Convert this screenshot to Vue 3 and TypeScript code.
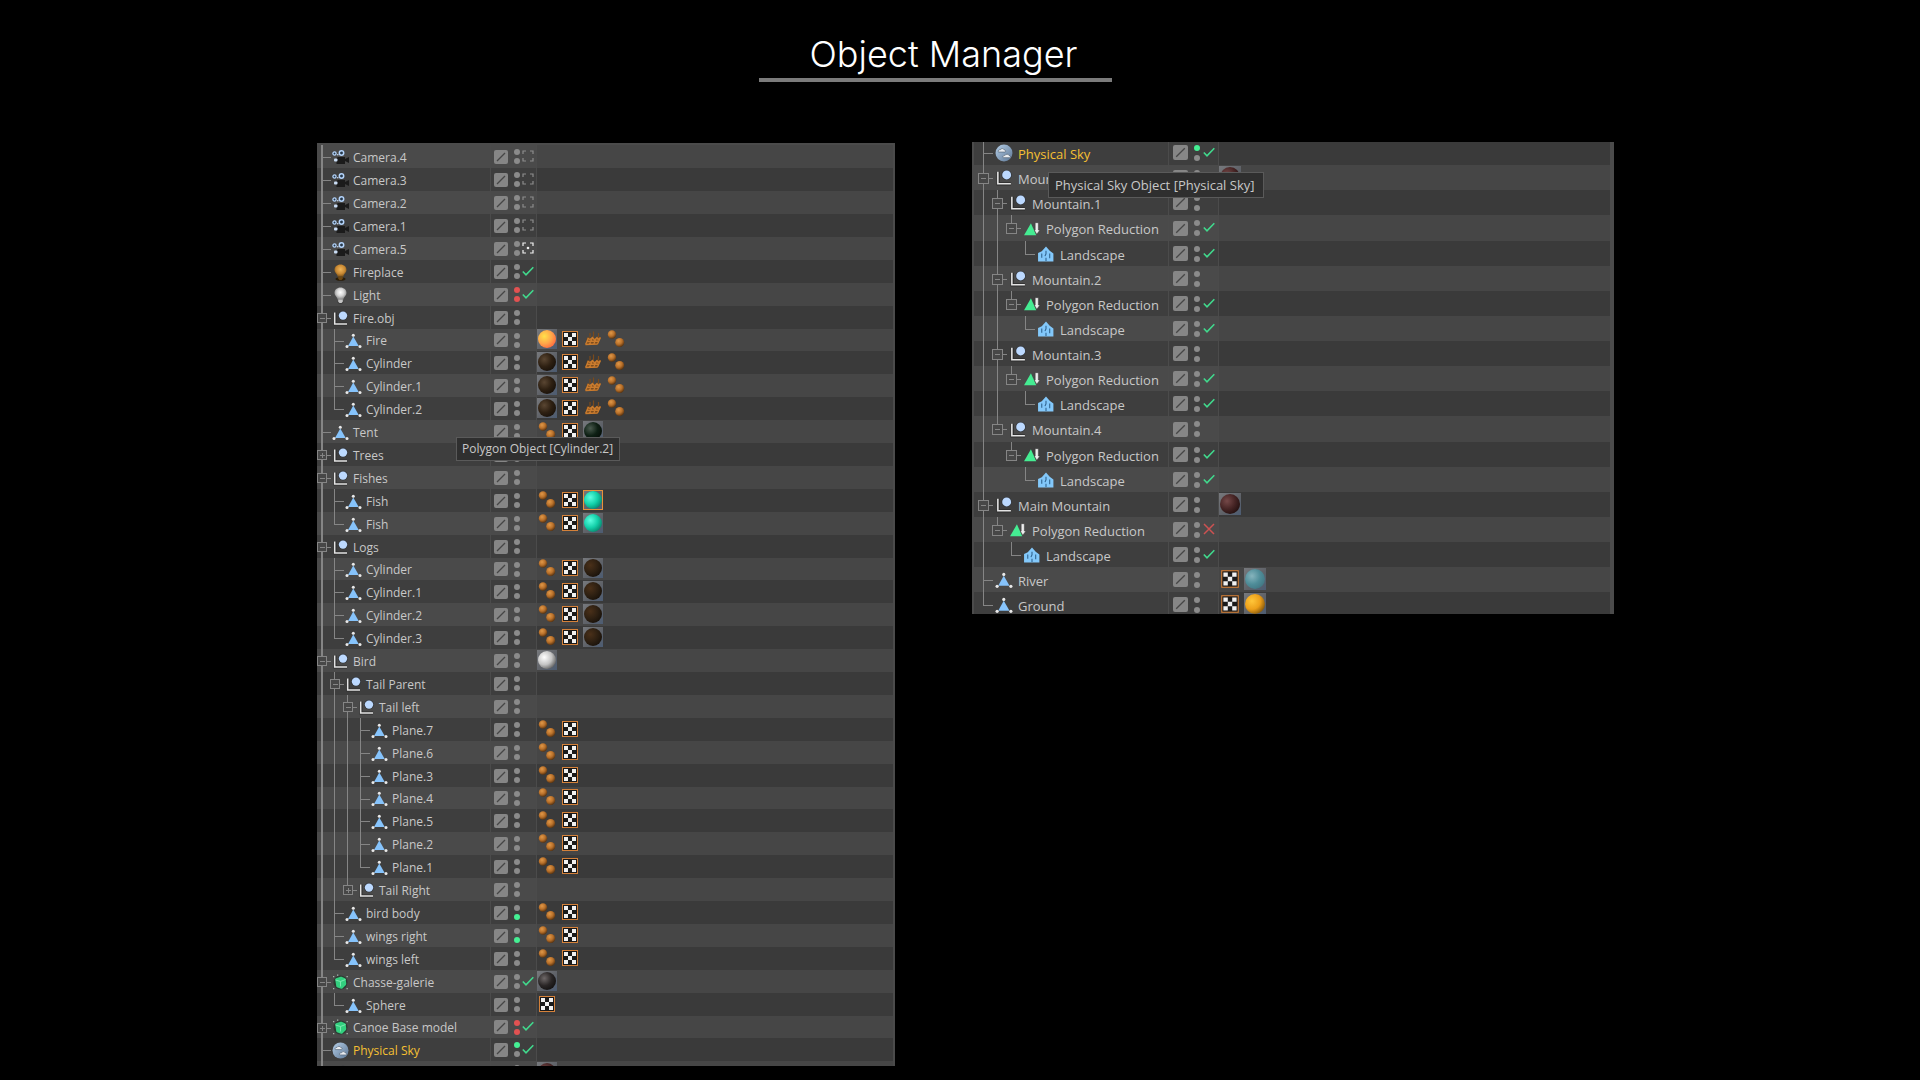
<script setup lang="ts">
type Guide = 'none' | 'line' | 'tee' | 'corner'
type Kind = 'camera' | 'bulb' | 'light' | 'null' | 'polygon' | 'volume' | 'sky' | 'reduction' | 'landscape'
type Dot = 'off' | 'on' | 'red'
type Mark = '' | 'check' | 'cross' | 'frame' | 'target'

interface Row {
  guides: Guide[]
  kind: Kind
  name: string
  box: '' | 'plus' | 'minus'
  dots: [Dot, Dot]
  mark: Mark
  tags: string[]
}

interface Panel {
  id: string
  label: string
  tip: string
  rows: Row[]
}

const codes: Record<string, Guide> = { ' ': 'none', '|': 'line', t: 'tee', c: 'corner' }

function row(guides: string, kind: Kind, name: string, options: Partial<Row> = {}): Row {
  return {
    guides: guides.split('').map((code) => codes[code]),
    kind,
    name,
    box: '',
    dots: ['off', 'off'],
    mark: '',
    tags: [],
    ...options,
  }
}

const surface = ['points', 'uv']

const scene: Row[] = [
  row('t', 'camera', 'Camera.4', { mark: 'frame' }),
  row('t', 'camera', 'Camera.3', { mark: 'frame' }),
  row('t', 'camera', 'Camera.2', { mark: 'frame' }),
  row('t', 'camera', 'Camera.1', { mark: 'frame' }),
  row('t', 'camera', 'Camera.5', { mark: 'target' }),
  row('t', 'bulb', 'Fireplace', { mark: 'check' }),
  row('t', 'light', 'Light', { mark: 'check', dots: ['red', 'red'] }),
  row('t', 'null', 'Fire.obj', { box: 'minus' }),
  row('|t', 'polygon', 'Fire', { tags: ['fire', 'uv', 'mesh', 'points'] }),
  row('|t', 'polygon', 'Cylinder', { tags: ['bark', 'uv', 'mesh', 'points'] }),
  row('|t', 'polygon', 'Cylinder.1', { tags: ['bark', 'uv', 'mesh', 'points'] }),
  row('|c', 'polygon', 'Cylinder.2', { tags: ['bark', 'uv', 'mesh', 'points'] }),
  row('t', 'polygon', 'Tent', { tags: [...surface, 'forest'] }),
  row('t', 'null', 'Trees', { box: 'plus' }),
  row('t', 'null', 'Fishes', { box: 'minus' }),
  row('|t', 'polygon', 'Fish', { tags: [...surface, 'teal picked'] }),
  row('|c', 'polygon', 'Fish', { tags: [...surface, 'teal'] }),
  row('t', 'null', 'Logs', { box: 'minus' }),
  row('|t', 'polygon', 'Cylinder', { tags: [...surface, 'wood'] }),
  row('|t', 'polygon', 'Cylinder.1', { tags: [...surface, 'wood'] }),
  row('|t', 'polygon', 'Cylinder.2', { tags: [...surface, 'wood'] }),
  row('|c', 'polygon', 'Cylinder.3', { tags: [...surface, 'wood'] }),
  row('t', 'null', 'Bird', { box: 'minus', tags: ['white'] }),
  row('|t', 'null', 'Tail Parent', { box: 'minus' }),
  row('||t', 'null', 'Tail left', { box: 'minus' }),
  ...[7, 6, 3, 4, 5, 2].map((n) => row('|||t', 'polygon', `Plane.${n}`, { tags: surface })),
  row('|||c', 'polygon', 'Plane.1', { tags: surface }),
  row('||c', 'null', 'Tail Right', { box: 'plus' }),
  row('|t', 'polygon', 'bird body', { tags: surface, dots: ['off', 'on'] }),
  row('|t', 'polygon', 'wings right', { tags: surface, dots: ['off', 'on'] }),
  row('|c', 'polygon', 'wings left', { tags: surface }),
  row('t', 'volume', 'Chasse-galerie', { box: 'minus', mark: 'check', tags: ['black'] }),
  row('|c', 'polygon', 'Sphere', { tags: ['uv'] }),
  row('t', 'volume', 'Canoe Base model', { box: 'plus', mark: 'check', dots: ['red', 'red'] }),
  row('t', 'sky', 'Physical Sky', { mark: 'check', dots: ['on', 'off'] }),
  row('t', 'null', 'Mountains', { box: 'minus', tags: ['rock'] }),
]

const mountains: Row[] = [1, 2, 3, 4].flatMap((n) => {
  const stem = n < 4 ? '||' : '| '
  return [
    row(n < 4 ? '|t' : '|c', 'null', `Mountain.${n}`, { box: 'minus' }),
    row(`${stem}c`, 'reduction', 'Polygon Reduction', { box: 'minus', mark: 'check' }),
    row(`${stem} c`, 'landscape', 'Landscape', { mark: 'check' }),
  ]
})

const terrain: Row[] = [
  row('t', 'sky', 'Physical Sky', { mark: 'check', dots: ['on', 'off'] }),
  row('t', 'null', 'Mountains', { box: 'minus', tags: ['rock'] }),
  ...mountains,
  row('t', 'null', 'Main Mountain', { box: 'minus', tags: ['rock'] }),
  row('|c', 'reduction', 'Polygon Reduction', { box: 'minus', mark: 'cross' }),
  row('| c', 'landscape', 'Landscape', { mark: 'check' }),
  row('t', 'polygon', 'River', { tags: ['uv', 'water'] }),
  row('c', 'polygon', 'Ground', { tags: ['uv', 'amber'] }),
]

const panels: Panel[] = [
  { id: 'scene', label: 'Scene objects', tip: 'Polygon Object [Cylinder.2]', rows: scene },
  { id: 'terrain', label: 'Terrain objects', tip: 'Physical Sky Object [Physical Sky]', rows: terrain },
]
</script>

<template>
  <main class="page">
    <svg class="defs" aria-hidden="true">
      <defs>
        <radialGradient id="copper" cx="38%" cy="32%" r="70%">
          <stop offset="0" stop-color="#e09848" />
          <stop offset="0.55" stop-color="#b8702a" />
          <stop offset="1" stop-color="#5a3410" />
        </radialGradient>
        <radialGradient id="glow-warm" cx="50%" cy="40%" r="60%">
          <stop offset="0" stop-color="#f0b558" />
          <stop offset="0.6" stop-color="#c98a35" />
          <stop offset="1" stop-color="#7c5218" />
        </radialGradient>
        <radialGradient id="glow-cold" cx="50%" cy="40%" r="60%">
          <stop offset="0" stop-color="#ffffff" />
          <stop offset="0.5" stop-color="#d4d4d4" />
          <stop offset="1" stop-color="#7d7d7d" />
        </radialGradient>
        <linearGradient id="air" x1="0" y1="0" x2="1" y2="1">
          <stop offset="0" stop-color="#b4cde6" />
          <stop offset="1" stop-color="#5d7896" />
        </linearGradient>
      </defs>
    </svg>

    <header class="heading">
      <h1>Object Manager</h1>
    </header>

    <div class="panels">
      <section v-for="panel in panels" :key="panel.id" class="panel" :class="panel.id" :aria-label="panel.label">
        <ul class="rows">
          <li v-for="(item, index) in panel.rows" :key="index" class="row">
            <div class="tree">
              <span v-for="(guide, depth) in item.guides" :key="depth" class="guide" :class="guide">
                <button
                  v-if="item.box && depth === item.guides.length - 1"
                  type="button"
                  class="expander"
                  :class="item.box"
                  :aria-label="`Toggle ${item.name}`"
                ></button>
              </span>
              <svg class="icon" viewBox="0 0 17 17" aria-hidden="true">
                <template v-if="item.kind === 'camera'">
                  <path d="M6 8h7v2l4-2v6l-4-2v3H4.500V9z" fill="#1b1b1b" />
                  <circle cx="2.500" cy="4.500" r="1.600" fill="#26384a" stroke="#b4d4fb" stroke-width="1.300" />
                  <circle cx="9.500" cy="4" r="2.200" fill="#26384a" stroke="#b4d4fb" stroke-width="1.500" />
                  <circle cx="5.800" cy="5.800" r="0.800" fill="#cfe2fa" />
                  <rect x="2" y="9.500" width="3.500" height="3" rx="1" fill="#c9dcf4" />
                </template>
                <template v-else-if="item.kind === 'bulb' || item.kind === 'light'">
                  <ellipse
                    cx="8.500"
                    cy="15"
                    :rx="item.kind === 'bulb' ? 5 : 3"
                    ry="1.800"
                    :fill="item.kind === 'bulb' ? '#2b1d08' : '#3a3a3a'"
                  />
                  <path
                    d="M8.500 0.500c3.600 0 6 2.300 6 5.200 0 3-2.800 4-3.200 7H5.700c-.4-3-3.200-4-3.200-7 0-2.900 2.400-5.200 6-5.200z"
                    :fill="item.kind === 'bulb' ? 'url(#glow-warm)' : 'url(#glow-cold)'"
                  />
                  <path
                    d="M6.200 12.500h4.600v2.200l-1.300 1.300h-2l-1.300-1.300z"
                    :fill="item.kind === 'bulb' ? '#6b4714' : '#c4c4c4'"
                  />
                </template>
                <template v-else-if="item.kind === 'null'">
                  <path d="M3 2.500V14H15" fill="none" stroke="#2c2c2c" stroke-width="3" />
                  <path d="M2.700 2.500V14H15" fill="none" stroke="#e4e4e4" stroke-width="1.500" />
                  <circle cx="11" cy="5.600" r="4.900" fill="#34373c" />
                  <circle cx="11" cy="5.600" r="4.200" fill="#bcd9ff" />
                </template>
                <template v-else-if="item.kind === 'polygon'">
                  <path d="M8.300 4.500L13.700 14H3z" fill="#86c3fb" />
                  <circle cx="8.300" cy="3.200" r="1.500" fill="#e9e9e9" />
                  <circle cx="2" cy="14.500" r="1.500" fill="#e9e9e9" />
                  <circle cx="15" cy="14.500" r="1.500" fill="#e9e9e9" />
                </template>
                <template v-else-if="item.kind === 'volume'">
                  <circle cx="8.500" cy="8.500" r="7" fill="#2c3a32" />
                  <path
                    d="M4.500 5.500l4.500-1.500 3.500 1.500.5 4.500-3.500 3.500-4-1.500z"
                    fill="#33d07f"
                    stroke="#33d07f"
                    stroke-width="2.500"
                    stroke-linejoin="round"
                  />
                  <path d="M3.500 6l5 1.500 5-2M8.500 7.500v5" fill="none" stroke="#8af0bb" stroke-width="0.800" />
                  <path
                    d="M1 2h1.300v1.300H1zM14.500 2h1.300v1.300h-1.300zM1 14h1.300v1.300H1zM14.500 14h1.300v1.300h-1.300zM5 0.500h1.300v1.300H5z"
                    fill="#a9b4ad"
                  />
                </template>
                <template v-else-if="item.kind === 'sky'">
                  <circle cx="8.500" cy="8.500" r="8" fill="url(#air)" />
                  <path
                    d="M3 7.200c0-1.500 1.300-2 2-1.700.5-1.600 3.400-1.600 3.900.2 1.300-.1 1.700 1.500.6 1.900H3.500z"
                    fill="#e9edf1"
                    stroke="#4b5a6b"
                    stroke-width="0.600"
                  />
                  <path
                    d="M7.500 12.500c0-1.500 1.300-2 2-1.700.5-1.600 3.400-1.600 3.900.2 1.300-.1 1.700 1.500.6 1.900H8z"
                    fill="#e9edf1"
                    stroke="#4b5a6b"
                    stroke-width="0.600"
                  />
                </template>
                <template v-else-if="item.kind === 'reduction'">
                  <path d="M7.500 3L12.500 14.500H1z" fill="#45ec92" />
                  <path d="M11.500 2.500h3v7h1.500l-3 4-2.300-4h.8z" fill="#eeeeee" stroke="#3b3b3b" stroke-width="0.500" />
                </template>
                <template v-else>
                  <path d="M1 15.500V7.500l3.500-1.500 4-4.500 3.500 4 3.500 2.500v7.500z" fill="#83c8fa" />
                  <path d="M4.500 8v4M8.500 5.500v3l-1 2M12 8v4.500M8.500 12v3" fill="none" stroke="#2d618c" stroke-width="1" />
                </template>
              </svg>
              <span class="name" :class="{ selected: item.kind === 'sky' }">{{ item.name }}</span>
            </div>

            <div class="flags">
              <button type="button" class="layer" :aria-label="`Layer of ${item.name}`">
                <svg viewBox="0 0 14 14" aria-hidden="true">
                  <path d="M3 11L11 3" stroke="#464646" stroke-width="1.200" />
                </svg>
              </button>
              <span class="dots">
                <i v-for="(dot, n) in item.dots" :key="n" class="dot" :class="dot"></i>
              </span>
              <svg v-if="item.mark" class="mark" viewBox="0 0 12 12" fill="none" aria-hidden="true">
                <path v-if="item.mark === 'check'" d="M0.800 6.500L4 9.800 11.300 2.300" stroke="#41d98d" stroke-width="1.600" />
                <path
                  v-else-if="item.mark === 'cross'"
                  d="M1 1l10 10M11 1L1 11"
                  stroke="#cc5252"
                  stroke-width="1.500"
                />
                <template v-else>
                  <path
                    d="M1 4V1h3M8 1h3v3M11 8v3H8M4 11H1V8"
                    :stroke="item.mark === 'target' ? '#f0f0f0' : '#8c8c8c'"
                    stroke-width="1.200"
                  />
                  <circle v-if="item.mark === 'target'" cx="6" cy="6" r="1.300" fill="#f0f0f0" />
                </template>
              </svg>
            </div>

            <div class="tags">
              <template v-for="(tag, n) in item.tags" :key="n">
                <svg v-if="tag === 'uv'" class="tag" viewBox="0 0 20 20" aria-hidden="true">
                  <rect x="2.500" y="2.500" width="15" height="15" fill="#1a1a1a" stroke="#d4813a" />
                  <path d="M4 4h4v4H4zM12 4h4v4h-4zM8 8h4v4H8zM4 12h4v4H4zM12 12h4v4h-4z" fill="#f1f1f1" />
                </svg>
                <svg v-else-if="tag === 'points'" class="tag" viewBox="0 0 20 20" aria-hidden="true">
                  <circle cx="6" cy="5.500" r="4.200" fill="url(#copper)" />
                  <circle cx="13.700" cy="13.500" r="4.500" fill="url(#copper)" />
                </svg>
                <svg v-else-if="tag === 'mesh'" class="tag" viewBox="0 0 20 20" aria-hidden="true">
                  <path d="M4 9l2-1 2 2 2-2 2 2 2-2 4 .5-3.500 7-12 .5z" fill="#7a4b1d" />
                  <path
                    d="M4.500 9l2.500 1.500L9.500 8.500l2 2.500 2.500-2.500 1 2 2.500-2M3.500 12.500l12.500-.5M2.500 15.500l12-.5M5.500 9l-3 6.500M9.500 8.500l-3 7M13.500 9l-3 6.500M17.500 8.500l-3 6.500"
                    fill="none"
                    stroke="#c97b2e"
                    stroke-width="1.300"
                  />
                  <path d="M7 8V4M10.500 8V2.500M15.500 8V4" stroke="#7a4a1c" stroke-width="1.200" />
                </svg>
                <span v-else class="tag material" :class="tag"></span>
              </template>
            </div>
          </li>
        </ul>
        <p class="tip" role="tooltip">{{ panel.tip }}</p>
      </section>
    </div>
  </main>
</template>

<style>
html,
body {
  background: #000;
}
</style>

<style scoped>
.page {
  min-height: 100vh;
  box-sizing: border-box;
  background: #000;
  color: #c8c8c8;
  font-family: 'Open Sans', 'Noto Sans', sans-serif;
}

.defs {
  position: absolute;
  width: 0;
  height: 0;
}

.heading {
  display: flex;
  justify-content: center;
  padding: 32px 49px 60px 0;
}

.heading h1 {
  margin: 0;
  padding: 0 35px 2px 51px;
  border-bottom: 4px solid #7b7b7b;
  color: #fff;
  font: 300 36px/44px Inter, sans-serif;
}

.panels {
  display: grid;
  grid-template-columns: 317fr 578fr 77fr 642fr 306fr;
  align-items: start;
  padding-bottom: 14px;
}

.panel {
  position: relative;
  --strip: #4b4b4b;
}

.scene {
  --row: 23px;
  --mid: 12px;
  --step: 13px;
  --box: 10px;
  --icon: 17px;
  --gap: 4px;
  --tree: 173px;
  --flags: 46px;
  --layer: 14px;
  --tag: 20px;
  --inset: 0px;
  --tag-gap: 3px;
  grid-column: 2;
  margin-top: 1px;
  font-size: 12px;
}

.terrain {
  --row: 25px;
  --mid: 13px;
  --step: 14px;
  --box: 11px;
  --icon: 18px;
  --gap: 5px;
  --tree: 194px;
  --flags: 50px;
  --layer: 15px;
  --tag: 22px;
  --inset: 5px;
  --tag-gap: 3px;
  grid-column: 4;
  font-size: 13px;
}

.rows {
  margin: 0;
  padding: 2px 2px 0 0;
  list-style: none;
  overflow: hidden;
  background: var(--strip);
}

.terrain .rows {
  padding: 0 4px 0 2px;
}

.row {
  display: flex;
  height: var(--row);
  background: #4a4a4a;
}

.scene .row:nth-child(10n + 9) {
  height: 22px;
}

.terrain .row:nth-child(8n + 4) {
  height: 26px;
}

.scene .row:nth-child(even),
.terrain .row:nth-child(odd) {
  background: #3e3e3e;
}

.scene .row:last-child {
  margin-bottom: -18px;
}

.terrain .row:first-child {
  margin-top: -2px;
}

.terrain .row:last-child {
  margin-bottom: -3px;
}

.tree {
  display: flex;
  align-items: center;
  flex: none;
  box-sizing: border-box;
  width: var(--tree);
  padding-left: var(--inset);
}

.guide {
  position: relative;
  flex: none;
  align-self: stretch;
  width: var(--step);
}

.guide::before,
.guide::after {
  content: '';
  position: absolute;
  left: 4px;
  background: #858585;
}

.line::before,
.tee::before {
  top: 0;
  bottom: 0;
  width: 1px;
}

.corner::before {
  top: 0;
  height: var(--mid);
  width: 1px;
}

.scene .guide:first-child::before {
  width: 2px;
}

.tee::after,
.corner::after {
  top: var(--mid);
  width: 10px;
  height: 1px;
}

.expander {
  position: absolute;
  z-index: 1;
  top: calc(var(--mid) - 5px);
  left: 0;
  box-sizing: border-box;
  width: var(--box);
  height: var(--box);
  padding: 0;
  border: 1px solid #858585;
  background: linear-gradient(#858585, #858585) center / 5px 1px no-repeat #474747;
}

.terrain .expander {
  left: -1px;
}

.expander.plus {
  background:
    linear-gradient(#858585, #858585) center / 5px 1px no-repeat,
    linear-gradient(#858585, #858585) center / 1px 5px no-repeat #474747;
}

.icon {
  flex: none;
  width: var(--icon);
  height: var(--icon);
  margin: 1px var(--gap) 0 2px;
}

.name {
  line-height: 20px;
  padding-top: 2px;
  white-space: nowrap;
}

.selected {
  color: #f5c033;
}

.flags {
  display: flex;
  flex: none;
  align-items: center;
  box-sizing: border-box;
  width: var(--flags);
  padding-left: 3px;
  border-left: 1px solid var(--strip);
}

.terrain .flags {
  padding-left: 4px;
}

.layer {
  flex: none;
  width: var(--layer);
  height: var(--layer);
  padding: 0;
  border: 0;
  border-radius: 2px;
  background: #868686;
}

.layer svg {
  display: block;
}

.dots {
  display: flex;
  flex: none;
  flex-direction: column;
  gap: 3px;
  margin: 0 2px 0 6px;
}

.terrain .dots {
  gap: 4px;
  margin-right: 3px;
}

.dot {
  width: 6px;
  height: 6px;
  border-radius: 50%;
  background: #8b8b8b;
}

.dot.on {
  background: #45f094;
}

.dot.red {
  background: #e25252;
}

.mark {
  flex: none;
  width: 12px;
  height: 12px;
  margin-bottom: 2px;
}

.tags {
  display: flex;
  flex: 1;
  align-items: center;
  gap: var(--tag-gap);
  padding-bottom: 2px;
  border-left: 1px solid var(--strip);
  background: rgb(0 0 0 / 5%);
}

.tag {
  flex: none;
  width: var(--tag);
  height: var(--tag);
}

.material {
  --lit: #5a4632;
  --base: #2e2012;
  --shade: #0e0a06;
  display: grid;
  box-sizing: border-box;
  padding: 1px;
  background: linear-gradient(135deg, #77797d, #5f6268 55%, #4c5c73);
}

.material::before {
  content: '';
  border-radius: 50%;
  background: radial-gradient(circle at 35% 35%, var(--lit), var(--base) 45%, var(--shade) 95%);
}

.fire {
  --lit: #ffe14a;
  --base: #ffa64a;
  --shade: #ff4a3a;
}

.wood {
  --lit: #4a3019;
}

.forest {
  --lit: #4a5a4e;
  --base: #0e2014;
  --shade: #020503;
}

.teal {
  --lit: #5cffe0;
  --base: #12cfa8;
  --shade: #04614f;
}

.white {
  --lit: #ffffff;
  --base: #c4c4c4;
  --shade: #2f2f2f;
}

.black {
  --lit: #6e6868;
  --base: #2a2626;
  --shade: #070606;
}

.rock {
  --lit: #754848;
  --base: #452424;
  --shade: #120707;
}

.water {
  --lit: #86b4bd;
  --base: #4f8d99;
  --shade: #3b6b78;
}

.amber {
  --lit: #ffc63a;
  --base: #eda01a;
  --shade: #4d3205;
}

.picked {
  outline: 1px solid #e8913a;
  outline-offset: -1px;
}

.tip {
  position: absolute;
  z-index: 2;
  box-sizing: border-box;
  margin: 0;
  border: 1px solid #5a5a5a;
  background: #2f2f2f;
  white-space: nowrap;
}

.scene .tip {
  top: 294px;
  left: 139px;
  padding: 0 6px 0 5px;
  line-height: 22px;
}

.terrain .tip {
  top: 30px;
  left: 76px;
  padding: 0 8px 0 6px;
  line-height: 24px;
}
</style>
